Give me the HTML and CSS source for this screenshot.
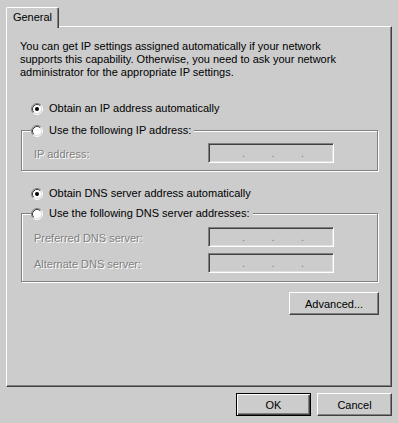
FILE: index.html
```html
<!DOCTYPE html>
<html lang="en">
<head>
    <meta charset="UTF-8">
    <title>Internet Protocol (TCP/IP) Properties</title>
    <link rel="stylesheet" href="styles.css">
</head>
<body>
    <svg class="defs" width="0" height="0">
        <symbol id="radio" viewBox="0 0 12 12">
            <circle cx="6" cy="6" r="4.5" fill="#fff"/>
            <path d="M2.11 9.89A5.5 5.5 0 0 1 9.89 2.11" stroke="#808080" fill="none"/>
            <path d="M9.89 2.11A5.5 5.5 0 0 1 2.11 9.89" stroke="#fff" fill="none"/>
            <path d="M2.82 9.18A4.5 4.5 0 0 1 9.18 2.82" stroke="#404040" fill="none"/>
            <path d="M9.18 2.82A4.5 4.5 0 0 1 2.82 9.18" stroke="#dfdfdf" fill="none"/>
        </symbol>
        <symbol id="radio-on" viewBox="0 0 12 12">
            <use href="#radio"/>
            <circle cx="6" cy="6" r="2" fill="#000"/>
        </symbol>
    </svg>

    <div class="dialog">
        <div class="tab-strip">
            <div class="tab">General</div>
        </div>
        <div class="panel">
            <p class="intro">You can get IP settings assigned automatically if your network<br>supports this capability. Otherwise, you need to ask your network<br>administrator for the appropriate IP settings.</p>

            <div class="radio radio-top">
                <svg width="12" height="12"><use href="#radio-on"/></svg>
                <span>Obtain an IP address automatically</span>
            </div>
            <fieldset class="group group-ip">
                <legend>
                    <span class="radio">
                        <svg width="12" height="12"><use href="#radio"/></svg>
                        <span>Use the following IP address:</span>
                    </span>
                </legend>
                <div class="field">
                    <span class="field-label">IP address:</span>
                    <div class="ip"><span>.</span><span>.</span><span>.</span></div>
                </div>
            </fieldset>

            <div class="radio radio-dns">
                <svg width="12" height="12"><use href="#radio-on"/></svg>
                <span>Obtain DNS server address automatically</span>
            </div>
            <fieldset class="group group-dns">
                <legend>
                    <span class="radio">
                        <svg width="12" height="12"><use href="#radio"/></svg>
                        <span>Use the following DNS server addresses:</span>
                    </span>
                </legend>
                <div class="field">
                    <span class="field-label">Preferred DNS server:</span>
                    <div class="ip"><span>.</span><span>.</span><span>.</span></div>
                </div>
                <div class="field">
                    <span class="field-label">Alternate DNS server:</span>
                    <div class="ip"><span>.</span><span>.</span><span>.</span></div>
                </div>
            </fieldset>

            <div class="panel-actions">
                <button type="button" class="btn btn-wide">Advanced...</button>
            </div>
        </div>
        <div class="actions">
            <button type="button" class="btn btn-default">OK</button>
            <button type="button" class="btn">Cancel</button>
        </div>
    </div>
</body>
</html>
```

FILE: styles.css
```css
body {
    margin: 0;
    background-color: #cccccc;
    font-family: "Liberation Sans", Arial, sans-serif;
    font-size: 11px;
    color: #000;
}
.defs {
    position: absolute;
}
.dialog {
    width: 398px;
    height: 423px;
    box-sizing: border-box;
    padding: 7px 6px 0 6px;
}
.tab-strip {
    display: flex;
}
.tab {
    position: relative;
    z-index: 1;
    width: 53px;
    height: 21px;
    box-sizing: border-box;
    margin-bottom: -2px;
    padding-top: 3px;
    border: 1px solid;
    border-color: #fff #404040 #ccc #fff;
    border-bottom: none;
    border-radius: 2px 2px 0 0;
    box-shadow: inset -1px 0 #808080;
    background-color: #cccccc;
    text-align: center;
    line-height: 13px;
}
.panel {
    height: 361px;
    box-sizing: border-box;
    padding: 13px 12px 0 13px;
    border: 1px solid;
    border-color: #fff #404040 #404040 #fff;
    box-shadow: inset -1px -1px #808080;
}
.intro {
    margin: 0;
    line-height: 13px;
}
.radio {
    display: flex;
    align-items: center;
    gap: 6px;
    height: 13px;
    line-height: 13px;
}
.radio svg {
    flex: none;
}
.radio-top {
    margin: 23px 0 0 11px;
}
.radio-dns {
    margin: 16px 0 0 11px;
}
.group {
    margin: 9px 1px 0 1px;
    padding: 0 12px 7px 12px;
    min-width: 0;
    border: 1px solid #808080;
    box-shadow: inset 1px 1px #fff, 1px 1px #fff;
}
.group-dns {
    margin-top: 7px;
    padding-bottom: 8px;
}
.group legend {
    margin-left: -3px;
    padding: 0 3px 0 0;
    background-color: #cccccc;
}
.field {
    display: flex;
    align-items: center;
    margin-top: 6px;
}
.group-dns .field {
    margin-top: 7px;
}
.group-dns .field + .field {
    margin-top: 6px;
}
.field-label {
    width: 174px;
    padding-top: 1px;
    color: #808080;
    text-shadow: 1px 1px 0 #fff;
}
.ip {
    display: flex;
    gap: 26.5px;
    width: 126px;
    height: 20px;
    box-sizing: border-box;
    padding: 3px 0 0 33px;
    border: 1px solid;
    border-color: #808080 #fff #fff #808080;
    box-shadow: inset 1px 1px #404040, inset -1px -1px #dfdfdf;
    color: #808080;
    line-height: 13px;
}
.ip span {
    width: 3px;
}
.panel-actions {
    display: flex;
    justify-content: flex-end;
    margin-top: 10px;
}
.actions {
    display: flex;
    justify-content: flex-end;
    gap: 6px;
    margin-top: 6px;
}
.btn {
    width: 75px;
    height: 23px;
    padding: 0;
    border: 1px solid;
    border-color: #fff #404040 #404040 #fff;
    box-shadow: inset -1px -1px #808080;
    background-color: #cccccc;
    font: inherit;
    color: #000;
}
.btn-wide {
    width: 90px;
}
.btn-default {
    border-color: #000;
    box-shadow: inset 1px 1px #fff, inset -1px -1px #404040, inset -2px -2px #808080;
}
```
